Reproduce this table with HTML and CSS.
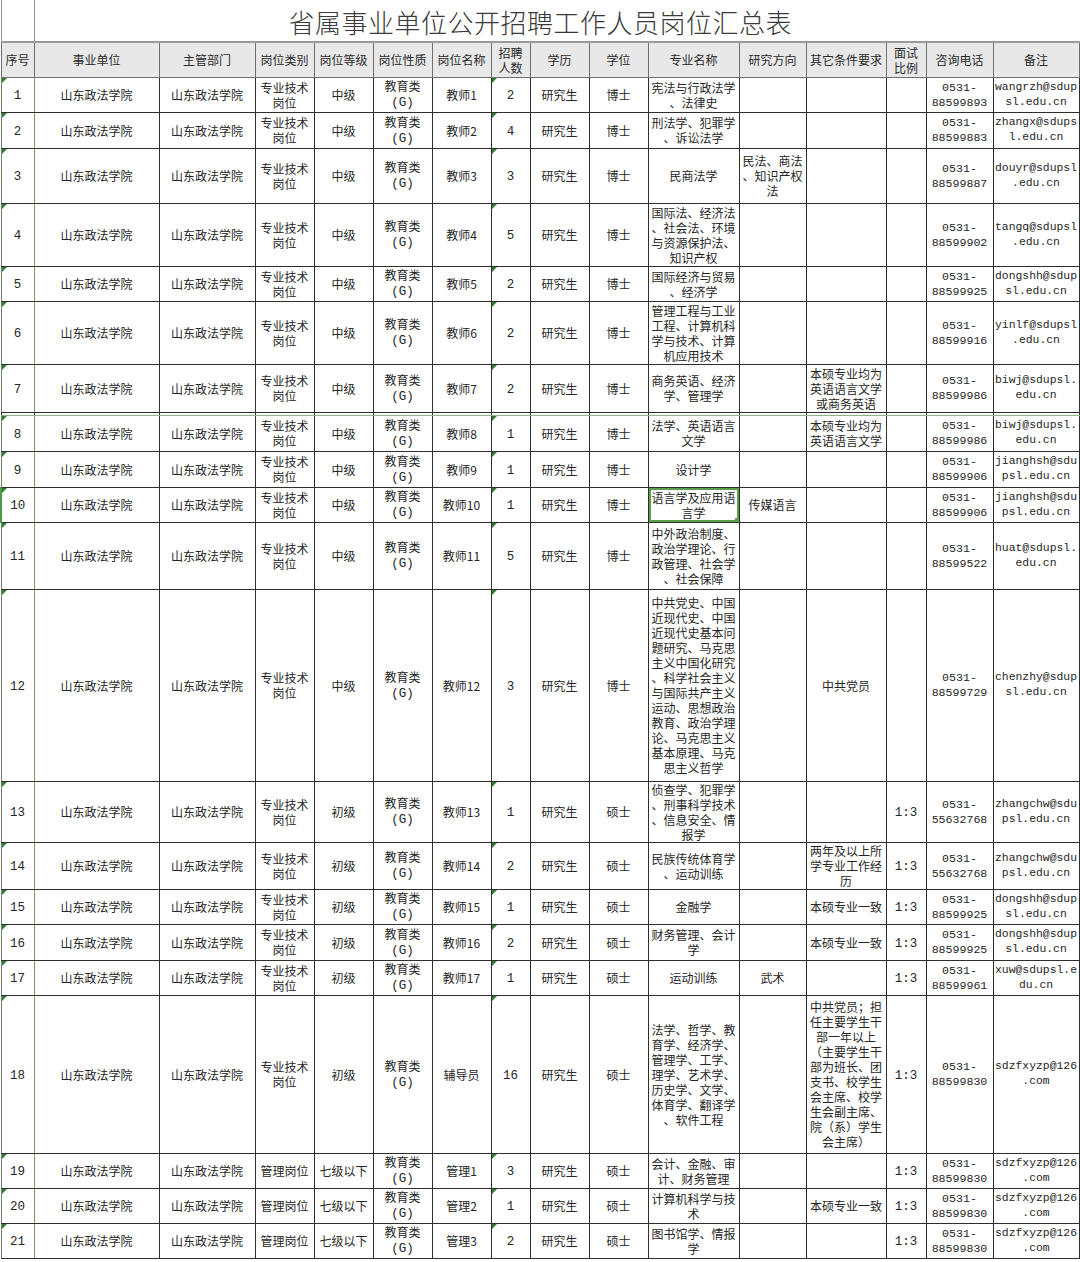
FILE: index.html
```html
<!DOCTYPE html>
<html lang="zh-CN">
<head>
<meta charset="utf-8">
<title>省属事业单位公开招聘工作人员岗位汇总表</title>
<link rel="stylesheet" href="styles.css">
</head>
<body>
<table class="sheet">
<colgroup>
<col class="w-no"><col class="w-unit"><col class="w-dept"><col class="w-s"><col class="w-s"><col class="w-s"><col class="w-s"><col class="w-cnt"><col class="w-s"><col class="w-s"><col class="w-major"><col class="w-dir"><col class="w-cond"><col class="w-ratio"><col class="w-tel"><col class="w-mail">
</colgroup>
<tr class="title-row">
<td class="title-side"></td>
<td class="title" colspan="15">省属事业单位公开招聘工作人员岗位汇总表</td>
</tr>
<tr class="head h35">
<td>序号</td><td>事业单位</td><td>主管部门</td><td>岗位类别</td><td>岗位等级</td><td>岗位性质</td><td>岗位名称</td><td>招聘<br>人数</td><td>学历</td><td>学位</td><td>专业名称</td><td>研究方向</td><td>其它条件要求</td><td>面试<br>比例</td><td>咨询电话</td><td>备注</td>
</tr>
<tr class="h35">
<td class="no m">1</td><td>山东政法学院</td><td>山东政法学院</td><td>专业技术<br>岗位</td><td>中级</td><td>教育类<br><span class="m">(G)</span></td><td>教师1</td><td class="cnt m">2</td><td>研究生</td><td>博士</td><td>宪法与行政法学<br>、法律史</td><td></td><td></td><td></td><td class="tel">0531-<br>88599893</td><td class="mail">wangrzh@sdup<br>sl.edu.cn</td>
</tr>
<tr class="h36">
<td class="no m">2</td><td>山东政法学院</td><td>山东政法学院</td><td>专业技术<br>岗位</td><td>中级</td><td>教育类<br><span class="m">(G)</span></td><td>教师2</td><td class="cnt m">4</td><td>研究生</td><td>博士</td><td>刑法学、犯罪学<br>、诉讼法学</td><td></td><td></td><td></td><td class="tel">0531-<br>88599883</td><td class="mail">zhangx@sdups<br>l.edu.cn</td>
</tr>
<tr class="h55">
<td class="no m">3</td><td>山东政法学院</td><td>山东政法学院</td><td>专业技术<br>岗位</td><td>中级</td><td>教育类<br><span class="m">(G)</span></td><td>教师3</td><td class="cnt m">3</td><td>研究生</td><td>博士</td><td>民商法学</td><td>民法、商法<br>、知识产权<br>法</td><td></td><td></td><td class="tel">0531-<br>88599887</td><td class="mail">douyr@sdupsl<br>.edu.cn</td>
</tr>
<tr class="h63">
<td class="no m">4</td><td>山东政法学院</td><td>山东政法学院</td><td>专业技术<br>岗位</td><td>中级</td><td>教育类<br><span class="m">(G)</span></td><td>教师4</td><td class="cnt m">5</td><td>研究生</td><td>博士</td><td>国际法、经济法<br>、社会法、环境<br>与资源保护法、<br>知识产权</td><td></td><td></td><td></td><td class="tel">0531-<br>88599902</td><td class="mail">tangq@sdupsl<br>.edu.cn</td>
</tr>
<tr class="h35">
<td class="no m">5</td><td>山东政法学院</td><td>山东政法学院</td><td>专业技术<br>岗位</td><td>中级</td><td>教育类<br><span class="m">(G)</span></td><td>教师5</td><td class="cnt m">2</td><td>研究生</td><td>博士</td><td>国际经济与贸易<br>、经济学</td><td></td><td></td><td></td><td class="tel">0531-<br>88599925</td><td class="mail">dongshh@sdup<br>sl.edu.cn</td>
</tr>
<tr class="h63">
<td class="no m">6</td><td>山东政法学院</td><td>山东政法学院</td><td>专业技术<br>岗位</td><td>中级</td><td>教育类<br><span class="m">(G)</span></td><td>教师6</td><td class="cnt m">2</td><td>研究生</td><td>博士</td><td>管理工程与工业<br>工程、计算机科<br>学与技术、计算<br>机应用技术</td><td></td><td></td><td></td><td class="tel">0531-<br>88599916</td><td class="mail">yinlf@sdupsl<br>.edu.cn</td>
</tr>
<tr class="h48">
<td class="no m">7</td><td>山东政法学院</td><td>山东政法学院</td><td>专业技术<br>岗位</td><td>中级</td><td>教育类<br><span class="m">(G)</span></td><td>教师7</td><td class="cnt m">2</td><td>研究生</td><td>博士</td><td>商务英语、经济<br>学、管理学</td><td></td><td>本硕专业均为<br>英语语言文学<br>或商务英语</td><td></td><td class="tel">0531-<br>88599986</td><td class="mail">biwj@sdupsl.<br>edu.cn</td>
</tr>
<tr class="gap">
<td></td><td></td><td></td><td></td><td></td><td></td><td></td><td></td><td></td><td></td><td></td><td></td><td></td><td></td><td></td><td></td>
</tr>
<tr class="h36">
<td class="no m">8</td><td>山东政法学院</td><td>山东政法学院</td><td>专业技术<br>岗位</td><td>中级</td><td>教育类<br><span class="m">(G)</span></td><td>教师8</td><td class="cnt m">1</td><td>研究生</td><td>博士</td><td>法学、英语语言<br>文学</td><td></td><td>本硕专业均为<br>英语语言文学</td><td></td><td class="tel">0531-<br>88599986</td><td class="mail">biwj@sdupsl.<br>edu.cn</td>
</tr>
<tr class="h36">
<td class="no m">9</td><td>山东政法学院</td><td>山东政法学院</td><td>专业技术<br>岗位</td><td>中级</td><td>教育类<br><span class="m">(G)</span></td><td>教师9</td><td class="cnt m">1</td><td>研究生</td><td>博士</td><td>设计学</td><td></td><td></td><td></td><td class="tel">0531-<br>88599906</td><td class="mail">jianghsh@sdu<br>psl.edu.cn</td>
</tr>
<tr class="h35">
<td class="no m sel-row">10</td><td>山东政法学院</td><td>山东政法学院</td><td>专业技术<br>岗位</td><td>中级</td><td>教育类<br><span class="m">(G)</span></td><td>教师10</td><td class="cnt m">1</td><td>研究生</td><td>博士</td><td class="selected">语言学及应用语<br>言学</td><td>传媒语言</td><td></td><td></td><td class="tel">0531-<br>88599906</td><td class="mail">jianghsh@sdu<br>psl.edu.cn</td>
</tr>
<tr class="h67">
<td class="no m">11</td><td>山东政法学院</td><td>山东政法学院</td><td>专业技术<br>岗位</td><td>中级</td><td>教育类<br><span class="m">(G)</span></td><td>教师11</td><td class="cnt m">5</td><td>研究生</td><td>博士</td><td>中外政治制度、<br>政治学理论、行<br>政管理、社会学<br>、社会保障</td><td></td><td></td><td></td><td class="tel">0531-<br>88599522</td><td class="mail">huat@sdupsl.<br>edu.cn</td>
</tr>
<tr class="h192 green-top">
<td class="no m">12</td><td>山东政法学院</td><td>山东政法学院</td><td>专业技术<br>岗位</td><td>中级</td><td>教育类<br><span class="m">(G)</span></td><td>教师12</td><td class="cnt m">3</td><td>研究生</td><td>博士</td><td>中共党史、中国<br>近现代史、中国<br>近现代史基本问<br>题研究、马克思<br>主义中国化研究<br>、科学社会主义<br>与国际共产主义<br>运动、思想政治<br>教育、政治学理<br>论、马克思主义<br>基本原理、马克<br>思主义哲学</td><td></td><td>中共党员</td><td></td><td class="tel">0531-<br>88599729</td><td class="mail">chenzhy@sdup<br>sl.edu.cn</td>
</tr>
<tr class="h61">
<td class="no m">13</td><td>山东政法学院</td><td>山东政法学院</td><td>专业技术<br>岗位</td><td>初级</td><td>教育类<br><span class="m">(G)</span></td><td>教师13</td><td class="cnt m">1</td><td>研究生</td><td>硕士</td><td>侦查学、犯罪学<br>、刑事科学技术<br>、信息安全、情<br>报学</td><td></td><td></td><td class="m">1:3</td><td class="tel">0531-<br>55632768</td><td class="mail">zhangchw@sdu<br>psl.edu.cn</td>
</tr>
<tr class="h47">
<td class="no m">14</td><td>山东政法学院</td><td>山东政法学院</td><td>专业技术<br>岗位</td><td>初级</td><td>教育类<br><span class="m">(G)</span></td><td>教师14</td><td class="cnt m">2</td><td>研究生</td><td>硕士</td><td>民族传统体育学<br>、运动训练</td><td></td><td>两年及以上所<br>学专业工作经<br>历</td><td class="m">1:3</td><td class="tel">0531-<br>55632768</td><td class="mail">zhangchw@sdu<br>psl.edu.cn</td>
</tr>
<tr class="h35">
<td class="no m">15</td><td>山东政法学院</td><td>山东政法学院</td><td>专业技术<br>岗位</td><td>初级</td><td>教育类<br><span class="m">(G)</span></td><td>教师15</td><td class="cnt m">1</td><td>研究生</td><td>硕士</td><td>金融学</td><td></td><td>本硕专业一致</td><td class="m">1:3</td><td class="tel">0531-<br>88599925</td><td class="mail">dongshh@sdup<br>sl.edu.cn</td>
</tr>
<tr class="h36">
<td class="no m">16</td><td>山东政法学院</td><td>山东政法学院</td><td>专业技术<br>岗位</td><td>初级</td><td>教育类<br><span class="m">(G)</span></td><td>教师16</td><td class="cnt m">2</td><td>研究生</td><td>硕士</td><td>财务管理、会计<br>学</td><td></td><td>本硕专业一致</td><td class="m">1:3</td><td class="tel">0531-<br>88599925</td><td class="mail">dongshh@sdup<br>sl.edu.cn</td>
</tr>
<tr class="h35">
<td class="no m">17</td><td>山东政法学院</td><td>山东政法学院</td><td>专业技术<br>岗位</td><td>初级</td><td>教育类<br><span class="m">(G)</span></td><td>教师17</td><td class="cnt m">1</td><td>研究生</td><td>硕士</td><td>运动训练</td><td>武术</td><td></td><td class="m">1:3</td><td class="tel">0531-<br>88599961</td><td class="mail">xuw@sdupsl.e<br>du.cn</td>
</tr>
<tr class="h158">
<td class="no m">18</td><td>山东政法学院</td><td>山东政法学院</td><td>专业技术<br>岗位</td><td>初级</td><td>教育类<br><span class="m">(G)</span></td><td>辅导员</td><td class="cnt m">16</td><td>研究生</td><td>硕士</td><td>法学、哲学、教<br>育学、经济学、<br>管理学、工学、<br>理学、艺术学、<br>历史学、文学、<br>体育学、翻译学<br>、软件工程</td><td></td><td>中共党员；担<br>任主要学生干<br>部一年以上<br>（主要学生干<br>部为班长、团<br>支书、校学生<br>会主席、校学<br>生会副主席、<br>院（系）学生<br>会主席）</td><td class="m">1:3</td><td class="tel">0531-<br>88599830</td><td class="mail">sdzfxyzp@126<br>.com</td>
</tr>
<tr class="h35">
<td class="no m">19</td><td>山东政法学院</td><td>山东政法学院</td><td>管理岗位</td><td>七级以下</td><td>教育类<br><span class="m">(G)</span></td><td>管理1</td><td class="cnt m">3</td><td>研究生</td><td>硕士</td><td>会计、金融、审<br>计、财务管理</td><td></td><td></td><td class="m">1:3</td><td class="tel">0531-<br>88599830</td><td class="mail">sdzfxyzp@126<br>.com</td>
</tr>
<tr class="h35">
<td class="no m">20</td><td>山东政法学院</td><td>山东政法学院</td><td>管理岗位</td><td>七级以下</td><td>教育类<br><span class="m">(G)</span></td><td>管理2</td><td class="cnt m">1</td><td>研究生</td><td>硕士</td><td>计算机科学与技<br>术</td><td></td><td>本硕专业一致</td><td class="m">1:3</td><td class="tel">0531-<br>88599830</td><td class="mail">sdzfxyzp@126<br>.com</td>
</tr>
<tr class="h35">
<td class="no m">21</td><td>山东政法学院</td><td>山东政法学院</td><td>管理岗位</td><td>七级以下</td><td>教育类<br><span class="m">(G)</span></td><td>管理3</td><td class="cnt m">2</td><td>研究生</td><td>硕士</td><td>图书馆学、情报<br>学</td><td></td><td></td><td class="m">1:3</td><td class="tel">0531-<br>88599830</td><td class="mail">sdzfxyzp@126<br>.com</td>
</tr>
</table>
</body>
</html>
```

FILE: styles.css
```css
html, body {
  margin: 0;
  padding: 0;
  background: #ffffff;
}

body {
  font-family: "Noto Sans CJK SC", "Noto Sans CJK JP", sans-serif;
  font-size: 12px;
  color: #262626;
}

.sheet {
  border-collapse: collapse;
  table-layout: fixed;
  width: 1078px;
}

.w-no { width: 33px; }
.w-unit { width: 125px; }
.w-dept { width: 96px; }
.w-s { width: 59px; }
.w-cnt { width: 39px; }
.w-major { width: 91px; }
.w-dir { width: 67px; }
.w-cond { width: 80px; }
.w-ratio { width: 40px; }
.w-tel { width: 67px; }
.w-mail { width: 86px; }

.sheet td {
  border: 1px solid #2e2e2e;
  padding: 0 2px;
  text-align: center;
  vertical-align: middle;
  line-height: 15px;
  white-space: nowrap;
  overflow: hidden;
  position: relative;
}

.m {
  font-family: "Liberation Mono", "Noto Sans CJK SC", monospace;
  font-size: 12.5px;
}

/* single-value numeric cells sit a touch lower, like the sheet */
.sheet td.m {
  padding-top: 4px;
}

.sheet td.tel {
  font-family: "Liberation Mono", monospace;
  font-size: 11.6px;
}

.sheet td.mail {
  font-family: "Liberation Mono", monospace;
  font-size: 11.4px;
  padding: 0 1px;
}

/* title row */
.title-row { height: 42px; }
.sheet .title-row td {
  border-top: none;
  border-bottom: 2px solid #9a9a9a;
}
.sheet .title-side {
  border-left: 1px solid #8a9a86;
  border-right: 1px solid #8aa283;
}
.sheet .title {
  border-right: none;
  font-size: 26px;
  font-weight: 300;
  color: #3a3a3a;
  padding: 3px 33px 0 0;
  line-height: 30px;
  letter-spacing: 0.5px;
}

/* header */
.head td {
  background: #e8e8e8;
  border-color: #6f6f6f;
  color: #2a2a2a;
}

/* row heights */
.h35 { height: 35px; }
.h36 { height: 36px; }
.h47 { height: 47px; }
.h48 { height: 48px; }
.h55 { height: 55px; }
.h61 { height: 61px; }
.h63 { height: 63px; }
.h67 { height: 67px; }
.h158 { height: 158px; }
.h192 { height: 192px; }

.gap { height: 3px; }
.sheet .gap td {
  padding: 0;
  font-size: 0;
  line-height: 0;
  border-bottom: 1px solid #8db583;
}

.green-top td { border-top-color: #7ea872; }

/* first column border is a lighter, greenish grey */
.sheet td.no {
  border-left-color: #6f8a69;
  border-right-color: #7a9a70;
}

/* Excel "number stored as text" markers */
.no::before,
.cnt::before {
  content: "";
  position: absolute;
  left: 0;
  top: 0;
  border-top: 5px solid #2f7d32;
  border-right: 5px solid transparent;
}

.sheet td.sel-row { border-left: 2px solid #4f9a44; }

/* selected cell */
.sheet td.selected {
  box-shadow: inset 0 0 0 2px #5aa04c;
}
.selected::after {
  content: "";
  position: absolute;
  right: 0;
  bottom: 0;
  width: 4px;
  height: 4px;
  background: #5aa04c;
}
```
